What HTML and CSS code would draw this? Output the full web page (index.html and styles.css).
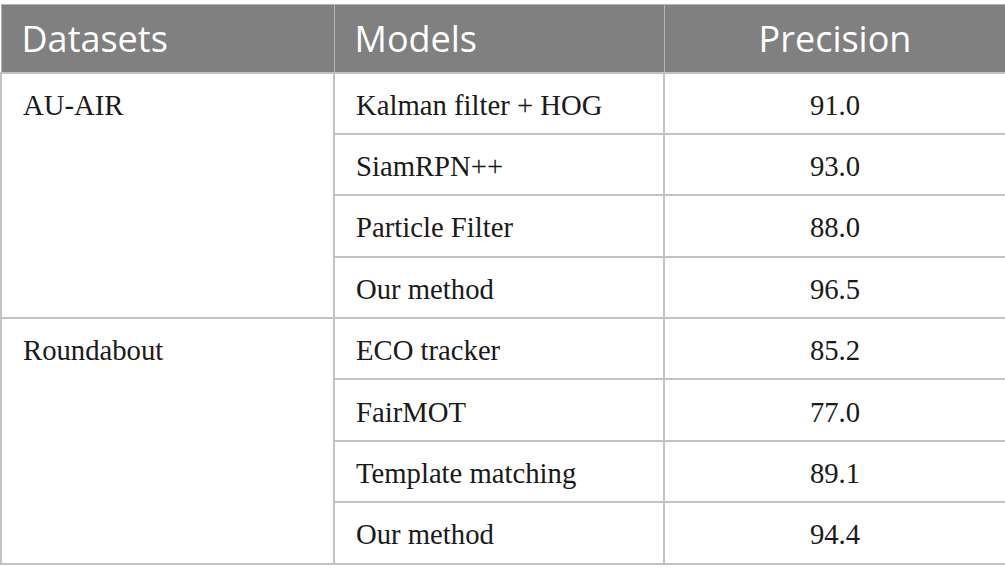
FILE: index.html
```html
<!DOCTYPE html>
<html>
<head>
<meta charset="utf-8">
<link rel="stylesheet" href="styles.css">
</head>
<body>
<table class="results">
  <colgroup>
    <col class="c1"><col class="c2"><col class="c3">
  </colgroup>
  <thead>
    <tr>
      <th>Datasets</th>
      <th>Models</th>
      <th class="num">Precision</th>
    </tr>
  </thead>
  <tbody>
    <tr>
      <td class="ds" rowspan="4">AU-AIR</td>
      <td>Kalman filter + HOG</td>
      <td class="num">91.0</td>
    </tr>
    <tr><td>SiamRPN++</td><td class="num">93.0</td></tr>
    <tr><td>Particle Filter</td><td class="num">88.0</td></tr>
    <tr><td>Our method</td><td class="num">96.5</td></tr>
    <tr>
      <td class="ds" rowspan="4">Roundabout</td>
      <td>ECO tracker</td>
      <td class="num">85.2</td>
    </tr>
    <tr><td>FairMOT</td><td class="num">77.0</td></tr>
    <tr><td>Template matching</td><td class="num">89.1</td></tr>
    <tr><td>Our method</td><td class="num">94.4</td></tr>
  </tbody>
</table>
</body>
</html>
```
FILE: styles.css
```css
html, body {
  margin: 0;
  padding: 0;
  background: #ffffff;
}
body {
  padding-top: 4px;
}
.results {
  border-collapse: collapse;
  width: 1005px;
  table-layout: fixed;
}
.c1 { width: 333px; }
.c2 { width: 330px; }
.c3 { width: 342px; }
.results th {
  background: #808080;
  color: #ffffff;
  font-family: "Open Sans", "Noto Sans", sans-serif;
  font-weight: 400;
  font-size: 36px;
  text-align: left;
  height: 68px;
  padding: 2px 20px 0;
  border: 1px solid #b4b4b4;
  box-sizing: border-box;
  line-height: 1;
}
.results td {
  font-family: "Liberation Serif", "Times New Roman", serif;
  font-size: 28.7px;
  color: #1a1a1a;
  height: 61.4px;
  padding: 4px 21px 0;
  border: 2px solid #c2c2c2;
  box-sizing: border-box;
  vertical-align: middle;
}
.results .num {
  text-align: center;
}
.results td.ds {
  vertical-align: top;
  padding-top: 15px;
}
```
